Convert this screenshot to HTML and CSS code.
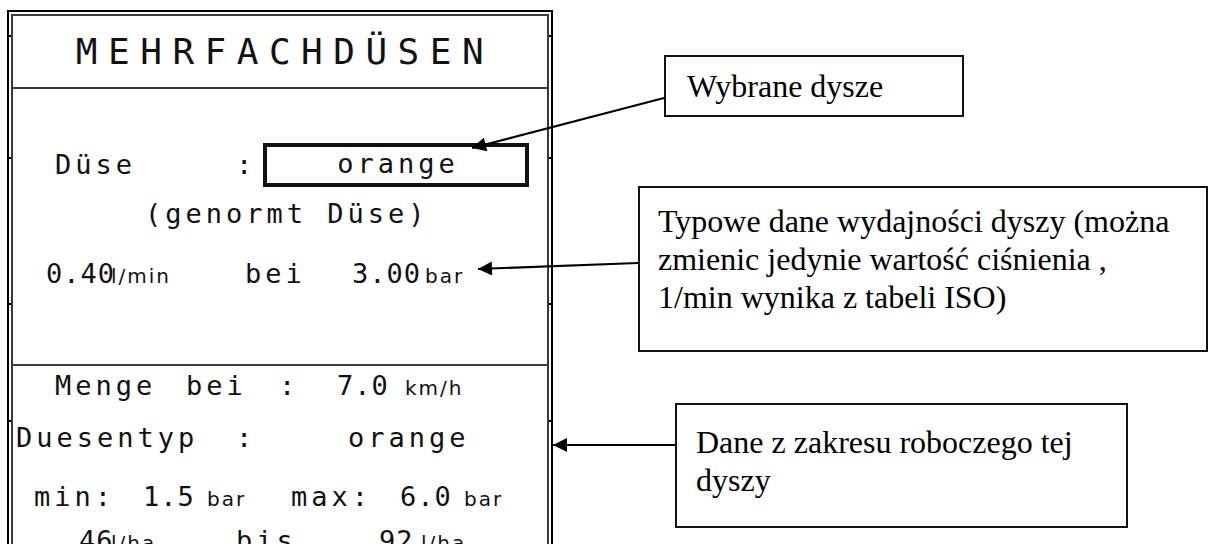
FILE: index.html
```html
<!DOCTYPE html>
<html lang="de">
<head>
    <meta charset="UTF-8">
    <title>Mehrfachdüsen</title>
    <link rel="stylesheet" href="styles.css">
</head>
<body>
<div class="page">
    <div class="screen">
        <span class="tick tl1"></span><span class="tick tl2"></span><span class="tick tl3"></span><span class="tick tl4"></span>
        <span class="tick tr1"></span><span class="tick tr2"></span><span class="tick tr3"></span><span class="tick tr4"></span>
        <div class="screen-inner">
            <div class="head">MEHRFACHDÜSEN</div>

            <div class="nozzle">
                <div class="row pick">
                    <span>Düse</span>
                    <span>:</span>
                    <span class="field">orange</span>
                </div>
                <div class="row norm">(genormt Düse)</div>
                <div class="row rate">
                    <span class="num">0.40</span>
                    <span class="unit">l/min</span>
                    <span>bei</span>
                    <span class="num">3.00</span>
                    <span class="unit">bar</span>
                </div>
            </div>

            <div class="range">
                <div class="row speed">
                    <span>Menge</span>
                    <span>bei</span>
                    <span>:</span>
                    <span class="num">7.0</span>
                    <span class="unit">km/h</span>
                </div>
                <div class="row type">
                    <span>Duesentyp</span>
                    <span>:</span>
                    <span>orange</span>
                </div>
                <div class="row limits">
                    <span>min:</span>
                    <span class="num">1.5</span>
                    <span class="unit">bar</span>
                    <span>max:</span>
                    <span class="num">6.0</span>
                    <span class="unit">bar</span>
                </div>
                <div class="row amount">
                    <span class="num">46</span>
                    <span class="unit">l/ha</span>
                    <span>bis</span>
                    <span class="num">92</span>
                    <span class="unit">l/ha</span>
                </div>
            </div>
        </div>
    </div>

    <div class="notes">
        <div class="note note-pick">Wybrane dysze</div>
        <div class="note note-rate">Typowe dane wydajności dyszy (można<br>zmienic jedynie wartość ciśnienia ,<br>1/min wynika z tabeli ISO)</div>
        <div class="note note-range">Dane z zakresu roboczego tej<br>dyszy</div>
    </div>

    <svg class="arrows" width="1210" height="544" viewBox="0 0 1210 544">
        <defs>
            <marker id="head" viewBox="0 0 10 10" refX="10" refY="5" markerWidth="8" markerHeight="7" orient="auto">
                <path d="M0,0 L10,5 L0,10 z" fill="#000"/>
            </marker>
        </defs>
        <line x1="664" y1="98" x2="472" y2="148" stroke="#000" stroke-width="2" marker-end="url(#head)"/>
        <line x1="638" y1="263" x2="478" y2="269" stroke="#000" stroke-width="2" marker-end="url(#head)"/>
        <line x1="675" y1="445" x2="553" y2="445" stroke="#000" stroke-width="2" marker-end="url(#head)"/>
    </svg>
</div>
</body>
</html>
```

FILE: styles.css
```css
body {
    margin: 0;
    background: #fff;
    color: #111;
    font-family: "DejaVu Sans Mono", monospace;
}
.page {
    position: relative;
    width: 1210px;
    height: 544px;
    overflow: hidden;
    display: flex;
    align-items: flex-start;
}

/* terminal screen */
.screen {
    position: relative;
    flex: none;
    box-sizing: border-box;
    width: 546px;
    height: 620px;
    margin: 10px 0 0 7px;
    border: 2px solid #000;
    padding: 2px;
}
.screen-inner {
    box-sizing: border-box;
    height: 100%;
    border: 2px solid #3a3a3a;
    border-bottom: 0;
}
.tick {
    position: absolute;
    width: 2px;
    height: 2px;
    background: #000;
}
.tl1, .tl2, .tl3, .tl4 { left: 0; }
.tr1, .tr2, .tr3, .tr4 { right: 0; }
.tl1, .tr1 { top: 23px; }
.tl2, .tr2 { top: 145px; }
.tl3, .tr3 { top: 291px; }
.tl4, .tr4 { top: 408px; }

.head {
    box-sizing: border-box;
    height: 73px;
    border-bottom: 2px solid #3a3a3a;
    display: flex;
    align-items: center;
    justify-content: center;
    padding-left: 10px;
    font-size: 36px;
    letter-spacing: 10.5px;
}
.nozzle {
    box-sizing: border-box;
    height: 277px;
    border-bottom: 2px solid #3a3a3a;
    overflow: hidden;
}

.row {
    font-size: 27px;
    line-height: 30px;
    letter-spacing: 4px;
    white-space: nowrap;
    display: grid;
    align-items: baseline;
}
.num {
    letter-spacing: 1px;
}
.unit {
    font-family: "DejaVu Sans", sans-serif;
    font-size: 20px;
    letter-spacing: 2px;
}

.pick {
    margin-top: 54px;
    padding-left: 42px;
    grid-template-columns: 181px 27px 266px;
    align-items: center;
}
.field {
    box-sizing: border-box;
    height: 44px;
    border: 4px solid #111;
    line-height: 34px;
    text-align: center;
    padding-left: 4px;
}
.norm {
    margin-top: 12px;
    padding-left: 132px;
    display: block;
}
.rate {
    margin-top: 30px;
    padding-left: 33px;
    grid-template-columns: 65px 134px 107px 73px auto;
}

.speed {
    margin-top: 5px;
    padding-left: 42px;
    grid-template-columns: 131px 93px 58px 68px auto;
}
.type {
    margin-top: 20px;
    padding-left: 3px;
    grid-template-columns: 220px 112px auto;
}
.limits {
    margin-top: 29px;
    padding-left: 21px;
    grid-template-columns: 109px 64px 84px 109px 64px auto;
}
.amount {
    margin-top: 12px;
    padding-left: 66px;
    grid-template-columns: 32px 125px 143px 42px auto;
}

/* annotations */
.notes {
    display: flex;
    flex-direction: column;
    align-items: flex-start;
    font-family: "Liberation Serif", "Times New Roman", serif;
    font-size: 32px;
    line-height: 38px;
    color: #000;
    white-space: nowrap;
}
.note {
    box-sizing: border-box;
    border: 2px solid #111;
    background: #fff;
}
.note-pick {
    width: 300px;
    height: 62px;
    margin: 55px 0 0 111px;
    padding: 10px 0 0 21px;
}
.note-rate {
    width: 570px;
    height: 166px;
    margin: 69px 0 0 85px;
    padding: 14px 10px 0 18px;
}
.note-range {
    width: 453px;
    height: 125px;
    margin: 51px 0 0 122px;
    padding: 18px 10px 0 19px;
}

.arrows {
    position: absolute;
    left: 0;
    top: 0;
    pointer-events: none;
}
```
